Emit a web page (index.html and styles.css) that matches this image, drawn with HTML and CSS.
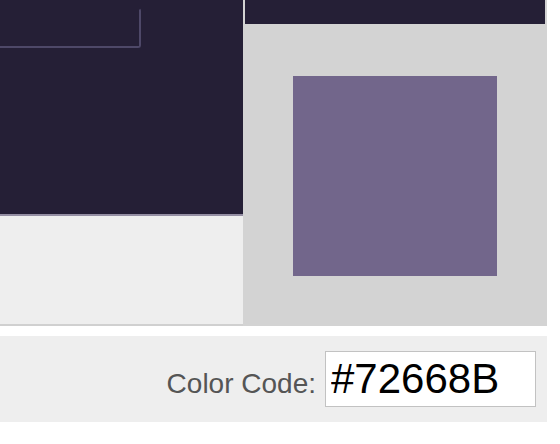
FILE: index.html
```html
<!DOCTYPE html>
<html>
<head>
<meta charset="utf-8">
<link rel="stylesheet" href="styles.css">
</head>
<body>
<div class="app">
  <div class="top">
    <div class="left">
      <div class="dark">
        <div class="frame"></div>
      </div>
      <div class="light"></div>
    </div>
    <div class="right">
      <div class="bar"></div>
      <div class="stage">
        <div class="swatch"></div>
      </div>
    </div>
  </div>
  <div class="bottom">
    <label class="label" for="code">Color Code:</label>
    <input class="code" id="code" type="text" value="#72668B">
  </div>
</div>
</body>
</html>
```
FILE: styles.css
```css
html, body {
  margin: 0;
  padding: 0;
  background: #ffffff;
}
.app {
  width: 547px;
  font-family: "Liberation Sans", Arial, sans-serif;
}
.top {
  display: flex;
  height: 326px;
}
.left {
  width: 243px;
  display: flex;
  flex-direction: column;
}
.dark {
  box-sizing: border-box;
  height: 216px;
  background: #251f36;
  border-bottom: 2px solid #948ea3;
  overflow: hidden;
  padding-top: 8px;
}
.frame {
  margin-left: -12px;
  width: 149px;
  height: 36px;
  border: 2px solid #4e4868;
  border-top-color: transparent;
  border-radius: 3px;
}
.light {
  flex: 1;
  background: #eeeeee;
  border-bottom: 2px solid #d0d0d0;
}
.right {
  width: 304px;
  background: #d3d3d3;
  display: flex;
  flex-direction: column;
}
.bar {
  height: 24px;
  margin: 0 2px;
  background: #251f36;
}
.stage {
  flex: 1;
  display: flex;
  align-items: center;
  justify-content: center;
  padding-top: 2px;
}
.swatch {
  width: 204px;
  height: 200px;
  background: #72668B;
}
.bottom {
  margin-top: 10px;
  height: 86px;
  background: #eeeeee;
  display: flex;
  align-items: center;
  justify-content: flex-end;
  gap: 9px;
  padding-right: 11px;
}
.label {
  font-size: 28px;
  color: #555555;
  margin-top: 10px;
}
.code {
  box-sizing: border-box;
  width: 211px;
  height: 56px;
  margin: 0;
  padding: 0 5px;
  border: 1px solid #c2c2c2;
  background: #ffffff;
  font-family: "Liberation Sans", Arial, sans-serif;
  font-size: 42px;
  color: #000000;
  outline: none;
}
```
